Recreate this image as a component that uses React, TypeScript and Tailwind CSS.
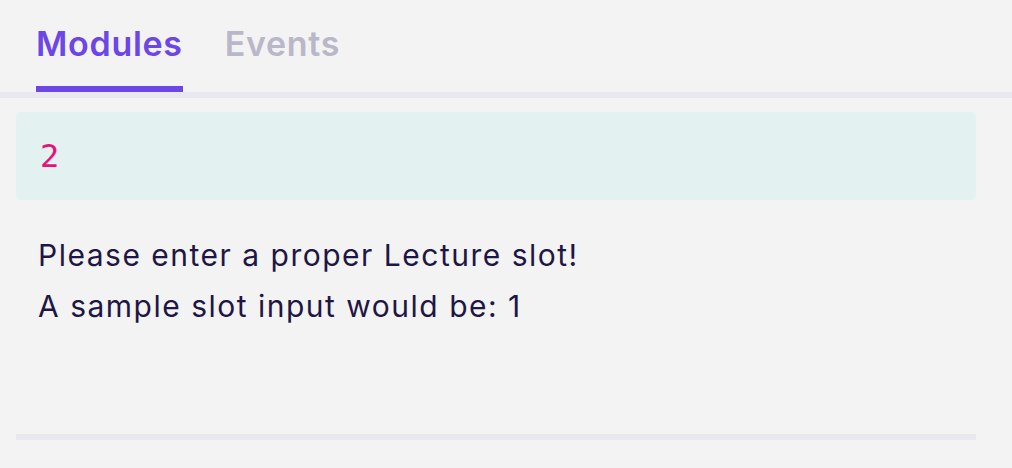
export default function App() {
  return (
    <div className="h-[468px] w-full bg-[#f3f3f3] font-['Inter',sans-serif] overflow-hidden">
      <div className="flex gap-[42px] pl-[36px] border-b-[6px] border-[#e9e8ee]">
        <button className="h-[92px] border-b-[6px] border-[#6c46e6] text-[34px] font-semibold text-[#6c46e6] tracking-[0.7px]">
          Modules
        </button>
        <button className="h-[92px] border-b-[6px] border-transparent text-[34px] font-semibold text-[#bab7c9] tracking-[0.7px]">
          Events
        </button>
      </div>

      <div className="pl-4 pr-9">
        <div className="mt-[14px] flex h-[88px] items-center rounded-[5px] bg-[#e3f1f1] pl-[24px]">
          <span className="font-['DejaVu_Sans_Mono',monospace] text-[32px] leading-none text-[#e8127a]">
            2
          </span>
        </div>

        <div className="mt-[30px] pl-[22px] text-[30px] leading-[51px] text-[#1e1645] tracking-[1.5px]">
          <p>Please enter a proper Lecture slot!</p>
          <p>A sample slot input would be: 1</p>
        </div>

        <div className="mt-[102px] h-[6px] bg-[#e9e8ee]" />
      </div>
    </div>
  )
}
